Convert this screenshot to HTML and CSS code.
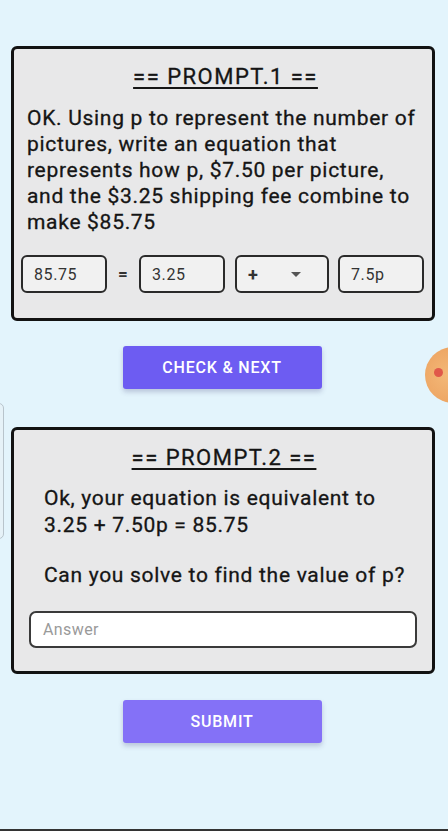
FILE: index.html
```html
<!DOCTYPE html>
<html>
<head>
<meta charset="utf-8">
<link rel="stylesheet" href="styles.css">
</head>
<body>
<div class="page">
  <div class="side-tab"></div>
  <div class="bubble"><span class="bubble-dot"></span></div>

  <section class="card card-one">
    <h2 class="prompt-title">== PROMPT.1 ==</h2>
    <p class="prompt-text">OK. Using p to represent the number of pictures, write an equation that represents how p, $7.50 per picture, and the $3.25 shipping fee combine to make $85.75</p>
    <div class="eq-row">
      <div class="eq-box">85.75</div>
      <div class="eq-sign">=</div>
      <div class="eq-box">3.25</div>
      <div class="eq-select"><span class="op">+</span><span class="caret"></span></div>
      <div class="eq-box">7.5p</div>
    </div>
  </section>

  <div class="btn-wrap btn-wrap-one">
    <button class="btn btn-check">CHECK &amp; NEXT</button>
  </div>

  <section class="card card-two">
    <h2 class="prompt-title">== PROMPT.2 ==</h2>
    <p class="prompt-text two">Ok, your equation is equivalent to<br>3.25 + 7.50p = 85.75</p>
    <p class="prompt-text two question">Can you solve to find the value of p?</p>
    <div class="answer">Answer</div>
  </section>

  <div class="btn-wrap btn-wrap-two">
    <button class="btn btn-submit">SUBMIT</button>
  </div>

  <div class="bottom-bar"></div>
</div>
</body>
</html>
```

FILE: styles.css
```css
html, body {
  margin: 0;
  padding: 0;
}
body {
  background: #e3f4fc;
  font-family: Roboto, "Liberation Sans", sans-serif;
  color: #151515;
}
.page {
  position: relative;
  width: 448px;
  height: 831px;
  overflow: hidden;
  display: flex;
  flex-direction: column;
}
.card {
  margin-left: 11px;
  width: 424px;
  box-sizing: border-box;
  border: 3px solid #121212;
  border-radius: 6px;
  background: #e8e8e9;
}
.card-one {
  margin-top: 46px;
  height: 275px;
  padding: 14px 8px 0 13px;
}
.card-two {
  margin-top: 38px;
  height: 247px;
  padding: 14px 14px 0 16px;
}
.prompt-title {
  margin: 0;
  text-align: center;
  font-size: 22px;
  font-weight: 400;
  line-height: 28px;
  letter-spacing: 1.5px;
  text-decoration: underline;
  text-decoration-thickness: 2px;
  text-underline-offset: 3px;
  -webkit-text-stroke: 0.3px #151515;
}
.prompt-text {
  margin: 14px 0 0 0;
  font-size: 21px;
  line-height: 26px;
  letter-spacing: 0.7px;
  -webkit-text-stroke: 0.3px #151515;
}
.prompt-text.two {
  margin-top: 13px;
  padding-left: 14px;
  line-height: 27px;
}
.prompt-text.question {
  margin-top: 23px;
}
.eq-row {
  margin-top: 20px;
  margin-left: -6px;
  display: flex;
  align-items: center;
}
.eq-box, .eq-select {
  box-sizing: border-box;
  height: 38px;
  border: 2px solid #2a2a2a;
  border-radius: 6px;
  background: #f1f1f1;
  font-size: 16px;
  letter-spacing: 0.6px;
  color: #333;
  display: flex;
  align-items: center;
  padding-left: 11px;
}
.eq-box {
  width: 86px;
}
.eq-sign {
  width: 32px;
  text-align: center;
  font-size: 17px;
  font-weight: 700;
  color: #333;
}
.eq-select {
  width: 94px;
  margin-left: 10px;
  margin-right: 9px;
  justify-content: space-between;
  padding-right: 26px;
  font-weight: 700;
  font-size: 18px;
}
.caret {
  width: 0;
  height: 0;
  border-left: 5px solid transparent;
  border-right: 5px solid transparent;
  border-top: 5px solid #555;
}
.btn-wrap {
  display: flex;
  justify-content: center;
}
.btn-wrap-one {
  margin-top: 25px;
}
.btn-wrap-two {
  margin-top: 26px;
}
.btn {
  margin-left: -4px;
  width: 199px;
  height: 43px;
  border: none;
  border-radius: 3px;
  color: #fff;
  font-family: Roboto, "Liberation Sans", sans-serif;
  font-size: 16px;
  font-weight: 500;
  letter-spacing: 0.8px;
  box-shadow: 0 3px 5px rgba(60, 60, 120, 0.25);
}
.btn-check {
  background: #6d5cf2;
}
.btn-submit {
  background: #8471f7;
}
.answer {
  margin-top: 22px;
  margin-left: -1px;
  width: 388px;
  height: 37px;
  box-sizing: border-box;
  border: 2px solid #3a3a3a;
  border-radius: 7px;
  background: #fff;
  color: #9a9a9a;
  font-size: 16px;
  letter-spacing: 0.4px;
  display: flex;
  align-items: center;
  padding-left: 12px;
}
.side-tab {
  position: absolute;
  left: -8px;
  top: 403px;
  width: 10px;
  height: 134px;
  border: 1.5px solid #b8c4cc;
  border-radius: 5px;
  background: #e6f2f8;
}
.bubble {
  position: absolute;
  left: 425px;
  top: 347px;
  width: 56px;
  height: 56px;
  border-radius: 50%;
  background: radial-gradient(circle at 40% 50%, #f3b878 0%, #eda462 70%, #f3c290 100%);
}
.bubble-dot {
  position: absolute;
  left: 9px;
  top: 21px;
  width: 9px;
  height: 9px;
  border-radius: 50%;
  background: #e0584a;
}
.bottom-bar {
  position: absolute;
  left: 0;
  bottom: 0;
  width: 448px;
  height: 2px;
  background: #333;
}
```
